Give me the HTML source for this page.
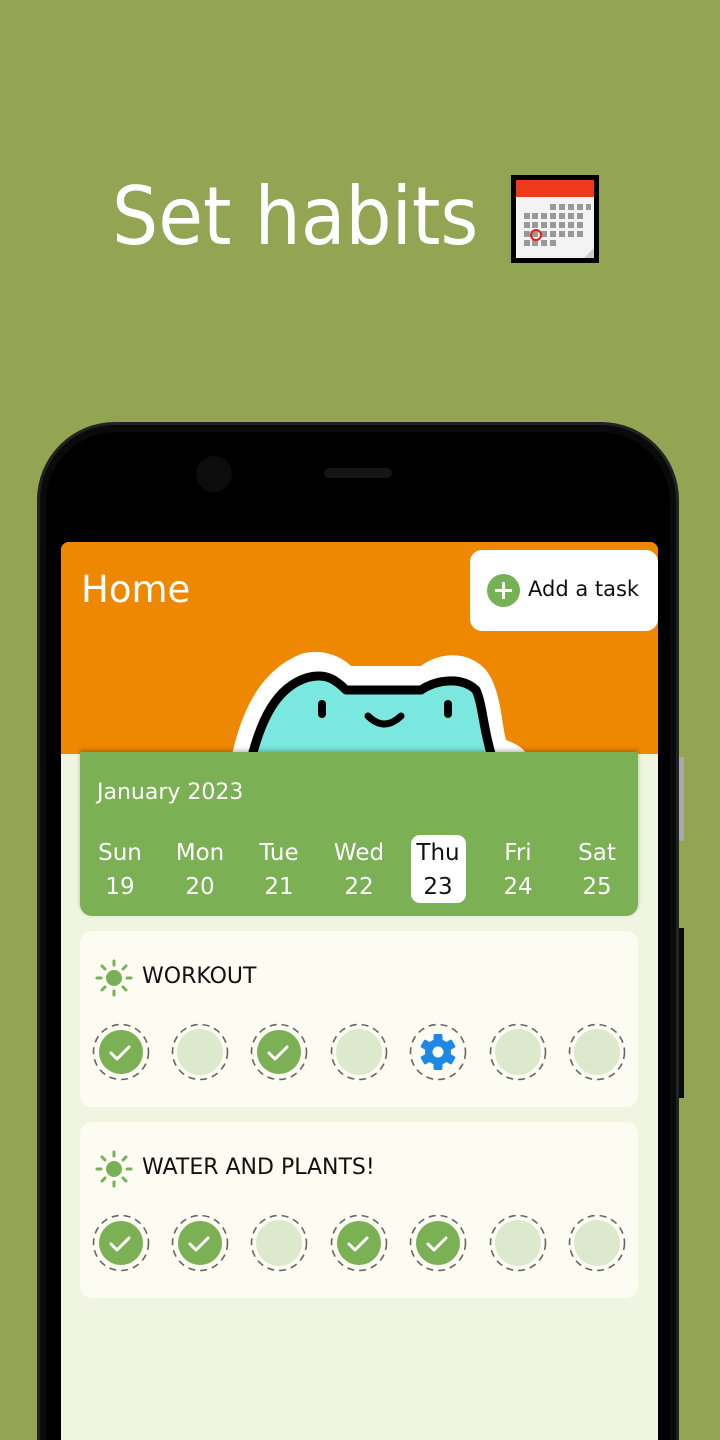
<!DOCTYPE html>
<html><head><meta charset="utf-8"><style>
*{margin:0;padding:0;box-sizing:border-box}
html,body{width:720px;height:1440px;overflow:hidden}
body{background:#93a452;position:relative;font-family:"DejaVu Sans","Liberation Sans",sans-serif}
.a{position:absolute}
</style></head><body>
<div class="a" style="left:112px;top:170px;font-size:80px;color:#fff;white-space:nowrap;transform:scaleX(0.91);transform-origin:0 0">Set habits</div>
<svg class="a" style="left:510px;top:174px" width="90" height="90" viewBox="0 0 90 90">
<rect x="1" y="1" width="88" height="88" fill="#000"/>
<rect x="6" y="6" width="78" height="78" fill="#f3f3f3"/>
<rect x="6" y="6" width="78" height="17" fill="#f03a1c"/>
<g fill="#999">
<rect x="40" y="30" width="6" height="6"/><rect x="49" y="30" width="6" height="6"/><rect x="58" y="30" width="6" height="6"/><rect x="67" y="30" width="6" height="6"/><rect x="76" y="30" width="5" height="6"/>
<rect x="14" y="39" width="6" height="6"/><rect x="22" y="39" width="6" height="6"/><rect x="31" y="39" width="6" height="6"/><rect x="40" y="39" width="6" height="6"/><rect x="49" y="39" width="6" height="6"/><rect x="58" y="39" width="6" height="6"/><rect x="67" y="39" width="6" height="6"/>
<rect x="14" y="48" width="6" height="6"/><rect x="22" y="48" width="6" height="6"/><rect x="31" y="48" width="6" height="6"/><rect x="40" y="48" width="6" height="6"/><rect x="49" y="48" width="6" height="6"/><rect x="58" y="48" width="6" height="6"/><rect x="67" y="48" width="6" height="6"/>
<rect x="14" y="57" width="6" height="6"/><rect x="22" y="57" width="6" height="6"/><rect x="31" y="57" width="6" height="6"/><rect x="40" y="57" width="6" height="6"/><rect x="49" y="57" width="6" height="6"/><rect x="58" y="57" width="6" height="6"/><rect x="67" y="57" width="6" height="6"/>
<rect x="14" y="66" width="6" height="6"/><rect x="22" y="66" width="6" height="6"/><rect x="31" y="66" width="6" height="6"/><rect x="40" y="66" width="6" height="6"/>
</g>
<circle cx="26" cy="61" r="5" fill="none" stroke="#e02010" stroke-width="2"/>
<path d="M74 84 L84 74 L84 84Z" fill="#ccc"/>
</svg>
<div class="a" style="left:678px;top:757px;width:6px;height:84px;background:#aaa;border-radius:2px"></div>
<div class="a" style="left:678px;top:928px;width:6px;height:170px;background:#0a0a0a"></div>
<div class="a" style="left:37px;top:422px;width:642px;height:1018px;background:#0a0a0a;border-radius:78px 78px 0 0;border:3px solid #222;border-bottom:0"></div>
<div class="a" style="left:46px;top:432px;width:624px;height:1008px;background:#000;border-radius:70px 70px 0 0"></div>
<div class="a" style="left:196px;top:456px;width:36px;height:36px;border-radius:50%;background:#0c0c0c"></div>
<div class="a" style="left:324px;top:468px;width:68px;height:10px;border-radius:5px;background:#151515"></div>
<div class="a" style="left:61px;top:542px;width:597px;height:898px;background:#eff5e1;overflow:hidden;border-radius:8px 8px 0 0">
 <div class="a" style="left:0;top:0;width:597px;height:212px;background:#ee8800"></div>
 <div class="a" style="left:20px;top:26px;font-size:37px;color:#fff">Home</div>
 <div class="a" style="left:409px;top:8px;width:188px;height:81px;background:#fff;border-radius:12px"></div>
 <div class="a" style="left:426px;top:32px;width:33px;height:33px;border-radius:50%;background:#78b056"></div>
 <div class="a" style="left:434px;top:47px;width:17px;height:3px;background:#fff"></div>
 <div class="a" style="left:441px;top:40px;width:3px;height:17px;background:#fff"></div>
 <div class="a" style="left:467px;top:35px;font-size:21px;color:#111">Add a task</div>
 <svg class="a" style="left:160px;top:108px" width="310" height="110" viewBox="0 0 310 110">
  <path d="M10 110 C20 60 40 20 80 4 C100 -2 120 6 130 16 L200 16 C215 4 245 -2 265 20 C280 40 280 70 285 90 C300 95 305 102 310 110Z" fill="#fff"/>
  <path d="M30 110 C40 70 55 38 85 28 C105 22 115 30 125 40 L200 40 C215 30 240 26 255 40 C262 55 262 80 272 110Z" fill="#7ae8de" stroke="#000" stroke-width="9" stroke-linejoin="round"/>
  <rect x="97" y="50" width="8" height="18" rx="4" fill="#000"/>
  <rect x="223" y="50" width="8" height="18" rx="4" fill="#000"/>
  <path d="M147 66 Q163 82 180 66" fill="none" stroke="#000" stroke-width="7" stroke-linecap="round"/>
 </svg>
 <div class="a" style="left:19px;top:210px;width:558px;height:164px;background:#7bb055;border-radius:0 0 12px 12px;box-shadow:0 -2px 4px rgba(0,0,0,.25)"></div>
 <div class="a" style="left:36px;top:238px;font-size:22px;color:#fff">January 2023</div>
 <div class="a" style="left:350px;top:293px;width:55px;height:68px;background:#fff;border-radius:9px"></div>
 <div class="a" style="left:19px;top:294px;width:558px;font-size:23px;color:#fff;line-height:34px">
  <div class="a" style="left:0;width:80px;text-align:center">Sun<br>19</div>
  <div class="a" style="left:80px;width:80px;text-align:center">Mon<br>20</div>
  <div class="a" style="left:159px;width:80px;text-align:center">Tue<br>21</div>
  <div class="a" style="left:239px;width:80px;text-align:center">Wed<br>22</div>
  <div class="a" style="left:318px;width:80px;text-align:center;color:#111">Thu<br>23</div>
  <div class="a" style="left:398px;width:80px;text-align:center">Fri<br>24</div>
  <div class="a" style="left:477px;width:80px;text-align:center">Sat<br>25</div>
 </div>
 <div class="a" style="left:19px;top:389px;width:558px;height:176px;background:#fcfcf3;border-radius:12px"></div>
 <div class="a" style="left:19px;top:580px;width:558px;height:176px;background:#fcfcf3;border-radius:12px"></div>
 <div class="a" style="left:81px;top:422px;font-size:22px;color:#111">WORKOUT</div>
 <div class="a" style="left:81px;top:613px;font-size:22px;color:#111">WATER AND PLANTS!</div>
</div>
<svg class="a" style="left:0;top:0" width="720" height="1440">
 <defs>
  <g id="sun"><circle r="8" fill="#78b056"/><g stroke="#78b056" stroke-width="3" stroke-linecap="round"><path d="M0-13v-4M0 13v4M-13 0h-4M13 0h4M9 9l3 3M-9-9l-3-3M9-9l3-3M-9 9l-3 3"/></g></g>
  <g id="d"><circle r="22" fill="#7bb055"/><circle r="27.5" fill="none" stroke="#666" stroke-width="1.6" stroke-dasharray="7 5"/><path d="M-10 1l6 6 12-12" fill="none" stroke="#fff" stroke-width="3" stroke-linecap="round" stroke-linejoin="round"/></g>
  <g id="e"><circle r="23" fill="#dde9cc"/><circle r="27.5" fill="none" stroke="#666" stroke-width="1.6" stroke-dasharray="7 5"/></g>
 </defs>
 <use href="#sun" x="114" y="978"/><use href="#sun" x="114" y="1169"/>
 <use href="#d" x="121" y="1052"/><use href="#e" x="200" y="1052"/><use href="#d" x="279" y="1052"/><use href="#e" x="359" y="1052"/>
 <g transform="translate(438 1052)"><circle r="27.5" fill="none" stroke="#666" stroke-width="1.6" stroke-dasharray="7 5"/>
  <g fill="#1e88e5"><circle r="13"/><g id="t"><rect x="-4.5" y="-18" width="9" height="8" rx="1.5"/></g><use href="#t" transform="rotate(60)"/><use href="#t" transform="rotate(120)"/><use href="#t" transform="rotate(180)"/><use href="#t" transform="rotate(240)"/><use href="#t" transform="rotate(300)"/></g>
  <circle r="5.5" fill="#fcfcf3"/></g>
 <use href="#e" x="518" y="1052"/><use href="#e" x="597" y="1052"/>
 <use href="#d" x="121" y="1243"/><use href="#d" x="200" y="1243"/><use href="#e" x="279" y="1243"/><use href="#d" x="359" y="1243"/><use href="#d" x="438" y="1243"/><use href="#e" x="518" y="1243"/><use href="#e" x="597" y="1243"/>
</svg>
</body></html>
